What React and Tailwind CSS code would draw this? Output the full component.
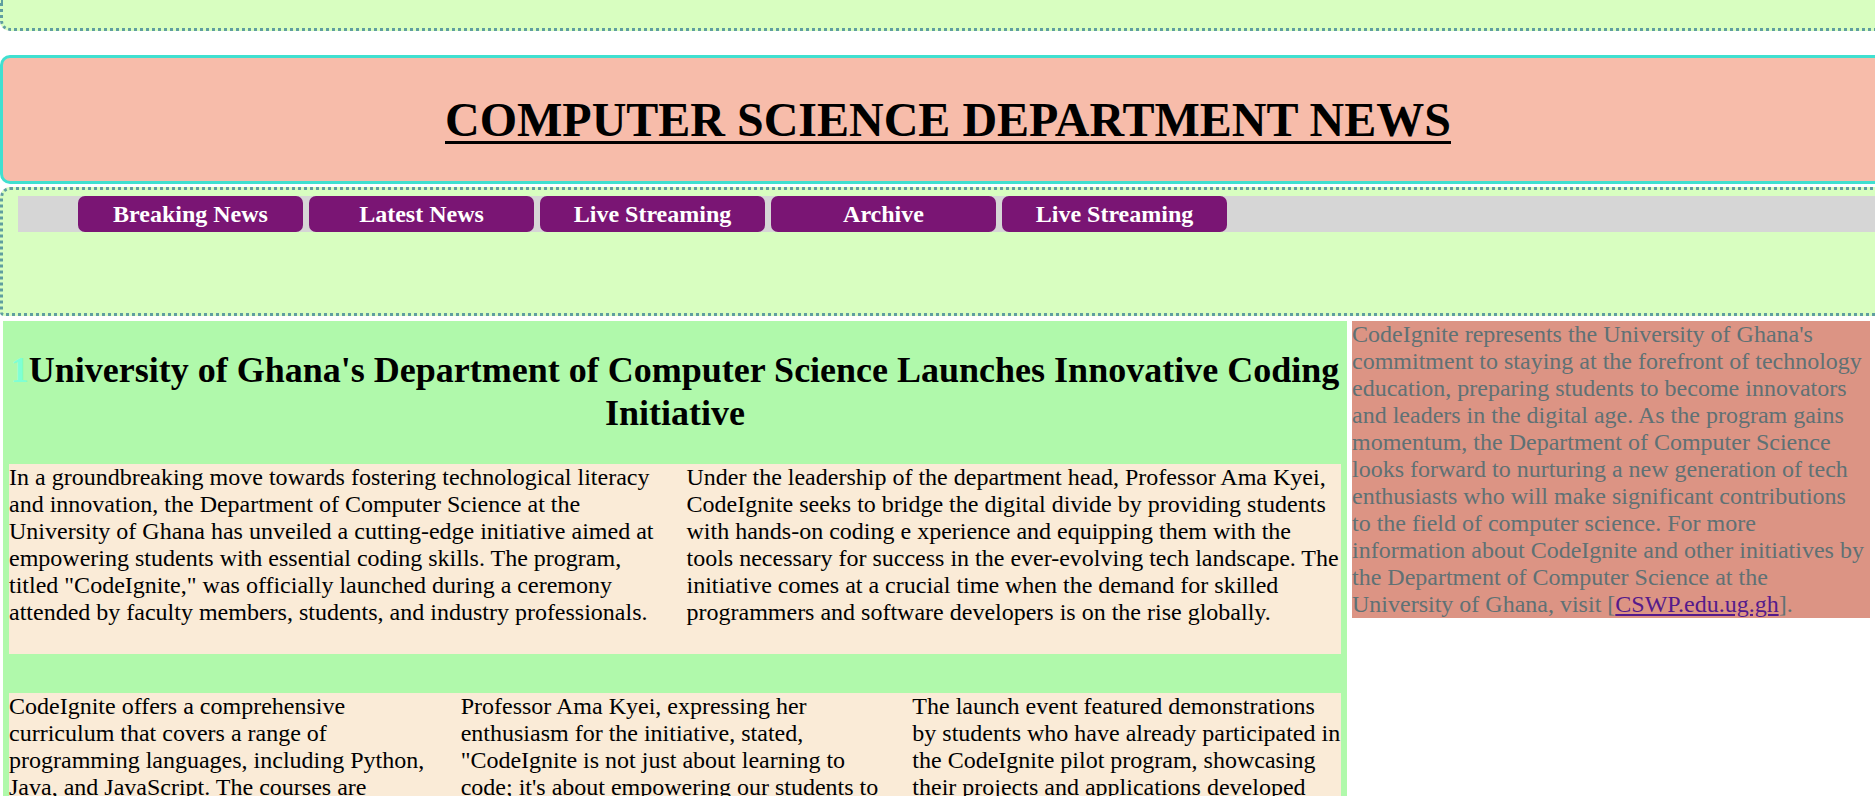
import React from 'react';

const navItems = ['Breaking News', 'Latest News', 'Live Streaming', 'Archive', 'Live Streaming'];

function App() {
  return (
    <div className="min-h-screen overflow-x-hidden bg-white font-['Liberation_Serif','Times_New_Roman',serif] text-[24px] leading-[27px] text-black">
      {/* top strip (scrolled section) */}
      <div className="h-[31px] w-[1896px] rounded-bl-[10px] border-b-[3px] border-l-[3px] border-dotted border-[#5f9ea0] bg-[#d8fec0]"></div>

      {/* header */}
      <header className="mt-[24px] w-[1896px] rounded-[10px] border-[3px] border-[#40e0d0] bg-[#f7bcaa] py-[34px] text-center">
        <h1 className="text-[48px] font-bold leading-[55px] underline decoration-[3px] underline-offset-[5px]">
          COMPUTER SCIENCE DEPARTMENT NEWS
        </h1>
      </header>

      {/* nav */}
      <nav className="mt-[3px] h-[129px] w-[1896px] rounded-tl-[10px] rounded-bl-[4px] border-[3px] border-r-0 border-dotted border-[#5f9ea0] bg-[#d8fec0] pl-[15px] pt-[6px]">
        <ul className="flex h-[36px] gap-[6px] bg-[#d6d6d6] pl-[60px]">
          {navItems.map((item, i) => (
            <li key={i}>
              <a className="flex h-[36px] w-[225px] items-center justify-center rounded-[7px] bg-[#7a1574] font-bold text-white">
                {item}
              </a>
            </li>
          ))}
        </ul>
      </nav>

      {/* content */}
      <div className="mt-[5px] flex items-start">
        <main className="ml-[3px] w-[1344px] bg-[#b0f9ab] px-[6px] pb-[30px]">
          <h2 className="pb-[29px] pt-[28px] text-center text-[36px] font-bold leading-[43px]">
            <span className="text-[#7fffd4]">1</span>University of Ghana's Department of Computer Science Launches Innovative Coding Initiative
          </h2>

          <div className="grid h-[190px] grid-cols-2 gap-x-[23px] bg-[#faebd7]">
            <p>
              In a groundbreaking move towards fostering technological literacy and innovation, the Department of Computer Science at the University of Ghana has unveiled a cutting-edge initiative aimed at empowering students with essential coding skills. The program, titled "CodeIgnite," was officially launched during a ceremony attended by faculty members, students, and industry professionals.
            </p>
            <p>
              Under the leadership of the department head, Professor Ama Kyei, CodeIgnite seeks to bridge the digital divide by providing students with hands-on coding e xperience and equipping them with the tools necessary for success in the ever-evolving tech landscape. The initiative comes at a crucial time when the demand for skilled programmers and software developers is on the rise globally.
            </p>
          </div>

          <div className="mt-[39px] grid grid-cols-3 gap-x-[23px] bg-[#faebd7] pb-[28px]">
            <p>
              CodeIgnite offers a comprehensive curriculum that covers a range of programming languages, including Python, Java, and JavaScript. The courses are designed to cater to students of all skill levels, from beginners to advanced programmers.
            </p>
            <p>
              Professor Ama Kyei, expressing her enthusiasm for the initiative, stated, "CodeIgnite is not just about learning to code; it's about empowering our students to think critically, solve problems creatively, and shape the future of technology."
            </p>
            <p>
              The launch event featured demonstrations by students who have already participated in the CodeIgnite pilot program, showcasing their projects and applications developed during the course of the program.
            </p>
          </div>
        </main>

        <aside className="ml-[5px] w-[518px] bg-[#dc9484] text-[#5f7174]">
          CodeIgnite represents the University of Ghana's commitment to staying at the forefront of technology education, preparing students to become innovators and leaders in the digital age. As the program gains momentum, the Department of Computer Science looks forward to nurturing a new generation of tech enthusiasts who will make significant contributions to the field of computer science. For more information about CodeIgnite and other initiatives by the Department of Computer Science at the University of Ghana, visit [<a href="#" className="text-[#551a8b] underline">CSWP.edu.ug.gh</a>].
        </aside>
      </div>
    </div>
  );
}

export default App;
